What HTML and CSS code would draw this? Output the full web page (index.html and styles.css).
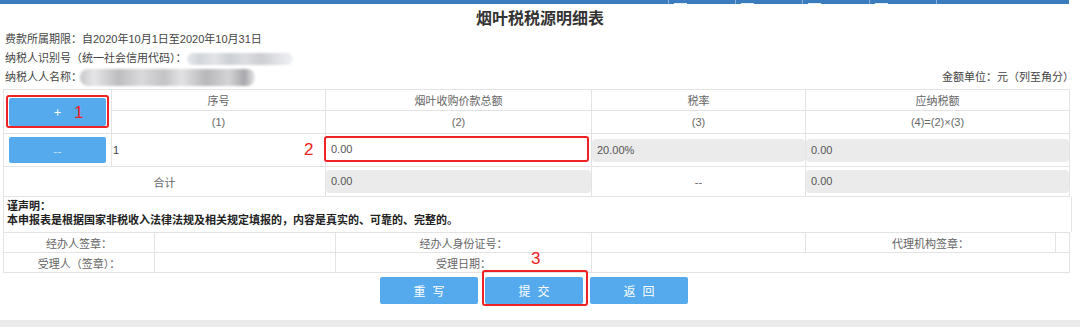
FILE: index.html
```html
<!DOCTYPE html>
<html lang="zh-CN">
<head>
  <meta charset="UTF-8">
  <title>烟叶税税源明细表</title>
  <link rel="stylesheet" href="styles.css">
</head>
<body>

  <div class="topbar">
    <span class="tab tab-wide"></span>
    <span class="tab"><i></i></span>
    <span class="tab"><i></i></span>
    <span class="tab"><i></i></span>
    <span class="tab"><i></i></span>
    <span class="tab tab-last"></span>
  </div>

  <h1 class="title">烟叶税税源明细表</h1>

  <div class="info">
    <p>费款所属期限：自2020年10月1日至2020年10月31日</p>
    <p>纳税人识别号（统一社会信用代码）：<span class="blur blur-id"></span></p>
    <p class="info-last">
      <span>纳税人人名称：<span class="blur blur-name"></span></span>
      <span>金额单位：元（列至角分）</span>
    </p>
  </div>

  <table class="grid main">
    <colgroup>
      <col style="width:108px">
      <col style="width:214px">
      <col style="width:266px">
      <col style="width:214px">
      <col style="width:264px">
    </colgroup>
    <tr class="r-head">
      <td rowspan="2" class="btn-cell">
        <span class="mark mark-1"><button class="btn btn-add">+</button><span class="note note-1">1</span></span>
      </td>
      <td>序号</td>
      <td>烟叶收购价款总额</td>
      <td>税率</td>
      <td>应纳税额</td>
    </tr>
    <tr class="r-num">
      <td>(1)</td>
      <td>(2)</td>
      <td>(3)</td>
      <td>(4)=(2)×(3)</td>
    </tr>
    <tr class="r-data">
      <td class="btn-cell"><button class="btn btn-del">--</button></td>
      <td class="left">1</td>
      <td class="field-cell">
        <div class="input-wrap"><input class="input-box" type="text" value="0.00"><span class="note note-2">2</span></div>
      </td>
      <td class="field-cell"><div class="ro-box">20.00%</div></td>
      <td class="field-cell"><div class="ro-box">0.00</div></td>
    </tr>
    <tr class="r-sum">
      <td colspan="2">合计</td>
      <td class="field-cell"><div class="ro-box">0.00</div></td>
      <td>--</td>
      <td class="field-cell"><div class="ro-box">0.00</div></td>
    </tr>
  </table>

  <div class="statement">
    <strong>谨声明：</strong>
    <strong>本申报表是根据国家非税收入法律法规及相关规定填报的，内容是真实的、可靠的、完整的。</strong>
  </div>

  <table class="grid sign">
    <colgroup>
      <col style="width:151px">
      <col style="width:181px">
      <col style="width:256px">
      <col style="width:214px">
      <col style="width:250px">
      <col style="width:14px">
    </colgroup>
    <tr>
      <td>经办人签章：</td>
      <td></td>
      <td>经办人身份证号：</td>
      <td></td>
      <td>代理机构签章：</td>
      <td></td>
    </tr>
    <tr>
      <td>受理人（签章）：</td>
      <td></td>
      <td>受理日期：</td>
      <td colspan="3"></td>
    </tr>
  </table>

  <div class="form-buttons">
    <button class="btn btn-big">重写</button>
    <span class="mark mark-3"><button class="btn btn-big">提交</button><span class="note note-3">3</span></span>
    <button class="btn btn-big">返回</button>
  </div>

  <div class="bottom-band"></div>

</body>
</html>
```

FILE: styles.css
```css
body {
  margin: 0;
  font-family: "Liberation Sans", "Noto Sans CJK SC", sans-serif;
  font-size: 11px;
  color: #555;
  background-color: white;
  height: 327px;
  overflow: hidden;
}

.topbar {
  display: flex;
  height: 4px;
  width: 1069px;
  background-color: #3b7cbf;
}

.tab {
  box-sizing: border-box;
  width: 67px;
  border-left: 1px solid #8fb3da;
  position: relative;
}

.tab i {
  position: absolute;
  left: 5px;
  bottom: 0;
  width: 13px;
  height: 1px;
  background-color: #e4edf7;
}

.tab-wide {
  width: 668px;
  border-left: none;
}

.tab-last {
  flex: 1;
}

.title {
  margin: 0;
  height: 26px;
  line-height: 26px;
  font-size: 16px;
  font-weight: bold;
  text-align: center;
  color: #333;
  font-family: "Noto Sans CJK SC", sans-serif;
}

.info {
  padding: 0 3px 0 5px;
  color: #444;
  font-family: "Liberation Sans", "Noto Sans CJK SC", sans-serif;
}

.info p {
  margin: 0;
  height: 19px;
  line-height: 19px;
  display: flex;
  align-items: center;
}

.info-last {
  justify-content: space-between;
  padding-right: 3px;
}

.info-last span {
  display: flex;
  align-items: center;
}

.blur {
  display: inline-block;
  border-radius: 8px;
  filter: blur(1px);
}

.blur-id {
  width: 106px;
  height: 12px;
  background: linear-gradient(90deg, #e6e9ee 0, #d2d5da 12%, #e2e4e8 26%, #cdd0d4 40%, #dcdee2 55%, #ccced2 70%, #dfe1e4 85%, #eef0f3 100%);
}

.blur-name {
  width: 175px;
  height: 17px;
  margin-left: -2px;
  background: linear-gradient(90deg, #c8c8ca 0, #e6e6e8 8%, #bdbdc0 22%, #dadadc 35%, #c3c3c6 48%, #e2e2e4 58%, #b8b8bb 72%, #d4d4d6 85%, #a9a9ad 94%, #e8e8ea 100%);
}

.grid {
  border-collapse: collapse;
  table-layout: fixed;
  margin-left: 3px;
  width: 1066px;
  color: #666;
  font-family: "Liberation Sans", "Noto Sans CJK SC", sans-serif;
}

.grid td {
  border: 1px solid #e3e3e3;
  text-align: center;
  padding: 0;
}

.main {
  margin-top: 2px;
}

.r-head td { height: 20px; }
.r-num td { height: 22px; }
.r-data td { height: 32px; }
.r-sum td { height: 29px; }

.grid td.left {
  text-align: left;
  padding-left: 1px;
  color: #444;
}

.btn-cell {
  padding: 0;
}

.btn {
  border: none;
  background-color: #55aaee;
  color: white;
  cursor: pointer;
  font-family: "Noto Sans CJK SC", sans-serif;
  border-radius: 2px;
}

.btn-add {
  display: block;
  width: 97px;
  height: 28px;
  font-size: 13px;
}

.btn-del {
  display: block;
  width: 97px;
  height: 26px;
  margin: 0 auto;
  font-size: 12px;
  color: #cfe6fa;
}

.field-cell {
  padding: 0 3px;
}

.ro-box {
  background-color: #ebebeb;
  border-radius: 4px;
  height: 23px;
  line-height: 23px;
  text-align: left;
  padding-left: 5px;
  color: #555;
}

.input-wrap {
  position: relative;
  margin: -3px 0 0 -2px;
}

.input-box {
  display: block;
  box-sizing: border-box;
  width: 265px;
  height: 26px;
  border: 2px solid #ee2222;
  border-radius: 3px;
  padding: 0 5px;
  font-size: 11px;
  color: #555;
  font-family: "Liberation Sans", sans-serif;
  background-color: white;
  outline: none;
}

.mark {
  position: relative;
  display: inline-block;
  vertical-align: top;
}

.mark::after {
  content: "";
  position: absolute;
  border: 2px solid #ee2222;
  border-radius: 3px;
}

.mark-1::after {
  top: -3px;
  left: -3px;
  right: -3px;
  bottom: -2px;
}

.mark-3::after {
  top: -7px;
  left: -3px;
  right: -5px;
  bottom: -2px;
}

.note {
  position: absolute;
  color: #ee2222;
  font-size: 17px;
  font-family: "Liberation Sans", sans-serif;
  line-height: 17px;
}

.note-1 {
  left: 65px;
  top: 6px;
}

.note-2 {
  left: -20px;
  top: 5px;
}

.note-3 {
  left: 46px;
  top: -27px;
}

.statement {
  margin-left: 3px;
  width: 1064px;
  height: 34px;
  border-left: 1px solid #e3e3e3;
  border-right: 1px solid #e3e3e3;
  padding: 1px 0 0 3px;
  display: flex;
  flex-direction: column;
  color: #222;
  line-height: 14px;
  font-family: "Noto Sans CJK SC", sans-serif;
}

.sign td {
  height: 19px;
}

.form-buttons {
  display: flex;
  justify-content: center;
  gap: 7px;
  width: 1062px;
  margin-left: 3px;
  padding-right: 4px;
  margin-top: 4px;
}

.btn-big {
  width: 98px;
  height: 27px;
  font-size: 12px;
  letter-spacing: 7px;
  text-indent: 7px;
}

.bottom-band {
  margin-top: 16px;
  height: 12px;
  background-color: #ebebeb;
}
```
